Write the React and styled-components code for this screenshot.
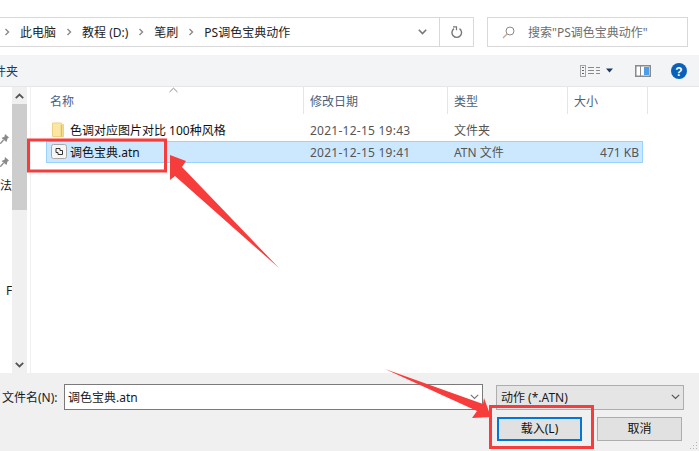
import React from "react";
import styled, { createGlobalStyle } from "styled-components";

const Global = createGlobalStyle`
  html, body { margin: 0; padding: 0; background: #fff; }
  body { font-family: "Noto Sans", "Noto Sans CJK SC", sans-serif; font-size: 12px; color: #1a1a1a; }
`;

const Page = styled.div`
  position: relative;
  width: 699px;
  height: 451px;
  overflow: hidden;
  display: flex;
  flex-direction: column;
  background: #fff;
`;

// address row
const NavRow = styled.div`
  height: 30px;
  margin-top: 17px;
  padding-right: 11px;
  display: flex;
  gap: 13px;
`;
const Address = styled.div`
  flex: 1;
  display: flex;
  align-items: center;
  border: 1px solid #d9d9d9;
  border-left: 0;
`;
const Crumbs = styled.div`
  flex: 1;
  display: flex;
  align-items: center;
  padding-left: 4px;
  font-size: 12px;
  color: #222;
`;
const Crumb = styled.span`
  margin: 0 10px;
`;
const NavBtn = styled.div`
  width: 33px;
  height: 100%;
  display: flex;
  align-items: center;
  justify-content: center;
  border-left: ${(p) => (p.$line ? "1px solid #d9d9d9" : "0")};
`;
const Search = styled.div`
  width: 201px;
  box-sizing: border-box;
  display: flex;
  align-items: center;
  gap: 13px;
  padding-left: 14px;
  border: 1px solid #d9d9d9;
  color: #6d6d6d;
  white-space: nowrap;
`;

// toolbar
const Toolbar = styled.div`
  height: 31px;
  margin-top: 8px;
  display: flex;
  align-items: center;
  justify-content: space-between;
  background: #f3f4f6;
  border-bottom: 1px solid #e6e6e6;
`;
const ToolLabel = styled.span`
  margin-left: -18px;
  color: #1e3a5c;
`;
const ToolIcons = styled.div`
  display: flex;
  align-items: center;
  gap: 20px;
  margin-right: 12px;
`;

// main area
const Main = styled.div`
  flex: 1;
  display: flex;
  min-height: 0;
`;
const Tree = styled.div`
  width: 12px;
  overflow: hidden;
  font-size: 12px;
`;
const TreeList = styled.div`
  padding-top: 40px;
  display: flex;
  flex-direction: column;
`;
const TreeItem = styled.div`
  height: 23px;
  display: flex;
  align-items: center;
  white-space: nowrap;
`;
const TreeGap = styled.div`
  height: 82px;
`;
const DriveItem = styled.div`
  height: 24px;
  display: flex;
  align-items: center;
  gap: 6px;
`;
const DriveMark = styled.span`
  width: 1px;
  height: 11px;
  background: #0a62b8;
`;
const Scroll = styled.div`
  width: 15px;
  display: flex;
  flex-direction: column;
  background: #f0f0f0;
`;
const ScrollArrow = styled.div`
  height: 17px;
  display: flex;
  align-items: center;
  justify-content: center;
`;
const Thumb = styled.div`
  height: 106px;
  background: #cdcdcd;
`;
const ScrollTrack = styled.div`
  flex: 1;
`;
const Files = styled.div`
  flex: 1;
  margin-left: 3px;
  border-left: 1px solid #f0f0f0;
`;
const Header = styled.div`
  height: 27px;
  display: flex;
  color: #4c607a;
`;
const HeadCell = styled.div`
  width: ${(p) => p.$w}px;
  display: flex;
  align-items: center;
  padding-left: ${(p) => p.$pad}px;
  box-sizing: border-box;
  border-right: 1px solid #e5e5e5;
  position: relative;
`;
const SortMark = styled.svg`
  position: absolute;
  left: 138px;
  top: 0;
`;
const Rows = styled.div`
  padding: 5px 0 0 15px;
`;
const Row = styled.div`
  width: 597px;
  height: 22px;
  box-sizing: border-box;
  display: flex;
  align-items: center;
  background: ${(p) => (p.$selected ? "#cce8ff" : "transparent")};
  border: 1px solid ${(p) => (p.$selected ? "#99d1ff" : "transparent")};
`;
const NameCell = styled.div`
  width: 256px;
  display: flex;
  align-items: center;
  gap: 3px;
  padding-left: 4px;
  box-sizing: border-box;
  color: #111;
  white-space: nowrap;
`;
const DateCell = styled.div`
  width: 144px;
  padding-left: 7px;
  box-sizing: border-box;
  letter-spacing: 0.25px;
  color: #555;
`;
const TypeCell = styled.div`
  width: 100px;
  padding-left: 7px;
  box-sizing: border-box;
  color: #555;
`;
const SizeCell = styled.div`
  width: 92px;
  text-align: right;
  color: #555;
`;

// bottom
const Footer = styled.div`
  height: 78px;
  padding: 11px 15px 0 2px;
  box-sizing: border-box;
  background: #f0f0f0;
  display: flex;
  flex-direction: column;
  gap: 7px;
`;
const FieldRow = styled.div`
  display: flex;
  align-items: center;
`;
const FieldLabel = styled.label`
  width: 62px;
  color: #1a1a1a;
`;
const Input = styled.div`
  width: 419px;
  height: 26px;
  box-sizing: border-box;
  display: flex;
  align-items: center;
  justify-content: space-between;
  padding: 0 3px 0 3px;
  background: #fff;
  border: 1px solid #7a7a7a;
`;
const Combo = styled.div`
  width: 188px;
  height: 25px;
  margin-left: 13px;
  box-sizing: border-box;
  display: flex;
  align-items: center;
  justify-content: space-between;
  padding: 0 3px 0 4px;
  background: #e5e5e5;
  border: 1px solid #adadad;
`;
const Buttons = styled.div`
  display: flex;
  justify-content: flex-end;
  gap: 15px;
  padding-right: 2px;
`;
const Button = styled.button`
  width: 85px;
  height: 24px;
  padding: 0 0 2px;
  font: inherit;
  color: #111;
  background: #e1e1e1;
  border: ${(p) => (p.$primary ? "2px solid #0078d7" : "1px solid #adadad")};
`;
const Grip = styled.svg`
  position: absolute;
  right: 1px;
  bottom: 1px;
`;

// the red marks drawn over the screenshot
const Overlay = styled.svg`
  position: absolute;
  inset: 0;
  pointer-events: none;
`;

const Sep = () => (
  <svg width="6" height="8" viewBox="0 0 6 8">
    <path d="M1.5 1l3 3-3 3" fill="none" stroke="#8a8a8a" strokeWidth="1.4" />
  </svg>
);
const Chevron = ({ color = "#666", w = 1.2, size = 9 }) => (
  <svg width={size} height="6" viewBox="0 0 9 6">
    <path d="M.8.8l3.7 3.7L8.200.8" fill="none" stroke={color} strokeWidth={w} />
  </svg>
);
const Pin = () => (
  <svg width="9" height="10" viewBox="0 0 9 10">
    <path d="M5 0L9 3.500 7.500 4.500 6.500 8 1.500 4 4.500 2.800z" fill="#8a8a8a" />
    <path d="M3.500 6L.3 9.700" stroke="#8a8a8a" strokeWidth="1.300" />
  </svg>
);

const App = () => {
  return (
    <Page>
      <Global />
      <NavRow>
        <Address>
          <Crumbs>
            <Sep />
            <Crumb>此电脑</Crumb>
            <Sep />
            <Crumb>教程 (D:)</Crumb>
            <Sep />
            <Crumb>笔刷</Crumb>
            <Sep />
            <Crumb>PS调色宝典动作</Crumb>
          </Crumbs>
          <NavBtn>
            <Chevron color="#777" w={1.6} />
          </NavBtn>
          <NavBtn $line>
            <svg width="12" height="13" viewBox="0 0 12 13">
              <path d="M3 2.600a4.800 4.800 0 1 0 5.500 0" fill="none" stroke="#777" strokeWidth="1.4" />
              <path d="M2 .8h3.500v3.500" fill="none" stroke="#777" strokeWidth="1.200" />
            </svg>
          </NavBtn>
        </Address>
        <Search>
          <svg width="13" height="13" viewBox="0 0 13 13">
            <circle cx="8" cy="5" r="4" fill="none" stroke="#8a8a8a" />
            <path d="M5 8l-4 4" stroke="#c9a58a" strokeWidth="1.200" />
          </svg>
          <span>搜索"PS调色宝典动作"</span>
        </Search>
      </NavRow>

      <Toolbar>
        <ToolLabel>文件夹</ToolLabel>
        <ToolIcons>
          <svg width="35" height="12" viewBox="0 0 35 12">
            <rect x=".5" y=".5" width="5" height="11" fill="none" stroke="#a5a5a5" />
            <path d="M2 2.500h2M2 5.500h2" stroke="#666" />
            <path d="M2 8.500h2" stroke="#c04040" />
            <path d="M8 2.500h6M8 5.500h6M8 8.500h6M16 2.500h4M16 5.500h4M16 8.500h4" stroke="#8a8a8a" />
            <path d="M26 3.500h7l-3.500 4z" fill="#1f3864" />
          </svg>
          <svg width="16" height="12" viewBox="0 0 16 12">
            <rect x=".75" y=".75" width="14.500" height="10.500" fill="#fff" stroke="#8a8a8a" strokeWidth="1.500" />
            <rect x="5" y="1" width="1" height="10" fill="#8a8a8a" />
            <rect x="9" y="2" width="5" height="8" fill="#4a9fe8" />
          </svg>
          <svg width="16" height="16" viewBox="0 0 16 16">
            <circle cx="8" cy="8" r="8" fill="#0a62b8" />
            <text x="8" y="12.500" textAnchor="middle" fontSize="12" fontWeight="700" fill="#fff" fontFamily="Liberation Sans">?</text>
          </svg>
        </ToolIcons>
      </Toolbar>

      <Main>
        <Tree>
          <TreeList>
            <TreeItem><Pin /></TreeItem>
            <TreeItem><Pin /></TreeItem>
            <TreeItem>法</TreeItem>
            <TreeGap />
            <DriveItem>
              <DriveMark />
              <span>F</span>
            </DriveItem>
          </TreeList>
        </Tree>
        <Scroll>
          <ScrollArrow>
            <svg width="9" height="6" viewBox="0 0 9 6">
              <path d="M.8 5.200L4.500 1.500l3.700 3.700" fill="none" stroke="#555" strokeWidth="1.800" />
            </svg>
          </ScrollArrow>
          <Thumb />
          <ScrollTrack />
          <ScrollArrow>
            <Chevron color="#555" w={1.8} />
          </ScrollArrow>
        </Scroll>
        <Files>
          <Header>
            <HeadCell $w={273} $pad={19}>
              名称
              <SortMark width="9" height="6" viewBox="0 0 9 6">
                <path d="M.5 5L4.500 1.200l4 3.800" fill="none" stroke="#8a8a8a" />
              </SortMark>
            </HeadCell>
            <HeadCell $w={144} $pad={6}>修改日期</HeadCell>
            <HeadCell $w={120} $pad={6}>类型</HeadCell>
            <HeadCell $w={80} $pad={6}>大小</HeadCell>
          </Header>
          <Rows>
            <Row>
              <NameCell>
                <svg width="16" height="16" viewBox="0 0 16 16">
                  <path d="M1.500 1h9v1.500h2v12h-11z" fill="#fbe7a1" stroke="#edd185" />
                  <path d="M10.500 3v11.500" stroke="#e3bd5c" strokeWidth="1.500" />
                </svg>
                色调对应图片对比 100种风格
              </NameCell>
              <DateCell>2021-12-15 19:43</DateCell>
              <TypeCell>文件夹</TypeCell>
              <SizeCell />
            </Row>
            <Row $selected>
              <NameCell>
                <svg width="16" height="16" viewBox="0 0 16 16">
                  <rect x=".5" y=".5" width="15" height="14" rx="2" fill="#f6f6f6" stroke="#a8a8a8" />
                  <path d="M5 4.500h4v2h2.500v4H7v-2H5z" fill="none" stroke="#333" />
                </svg>
                调色宝典.atn
              </NameCell>
              <DateCell>2021-12-15 19:41</DateCell>
              <TypeCell>ATN 文件</TypeCell>
              <SizeCell>471 KB</SizeCell>
            </Row>
          </Rows>
        </Files>
      </Main>

      <Footer>
        <FieldRow>
          <FieldLabel>文件名(N):</FieldLabel>
          <Input>
            调色宝典.atn
            <Chevron color="#777" />
          </Input>
          <Combo>
            动作 (*.ATN)
            <Chevron color="#555" />
          </Combo>
        </FieldRow>
        <Buttons>
          <Button $primary>载入(L)</Button>
          <Button>取消</Button>
        </Buttons>
      </Footer>

      <Grip width="9" height="9" viewBox="0 0 9 9">
        <path d="M7 1h1v1H7zM4 4h1v1H4zM7 4h1v1H7zM1 7h1v1H1zM4 7h1v1H4zM7 7h1v1H7z" fill="#b5b5b5" />
      </Grip>

      <Overlay width="699" height="451" viewBox="0 0 699 451">
        <rect x="28.500" y="140" width="137" height="31" fill="none" stroke="#f73c3c" strokeWidth="3" />
        <rect x="490.500" y="406.500" width="102" height="41" fill="none" stroke="#f73c3c" strokeWidth="3" />
        <path d="M170 155L186 161 182 167 279 268 175 176 170 180z" fill="#f73c3c" />
        <path d="M385 369L483 404 484 398 491 417 472 418 477 411z" fill="#f73c3c" />
      </Overlay>
    </Page>
  );
};

export default App;
